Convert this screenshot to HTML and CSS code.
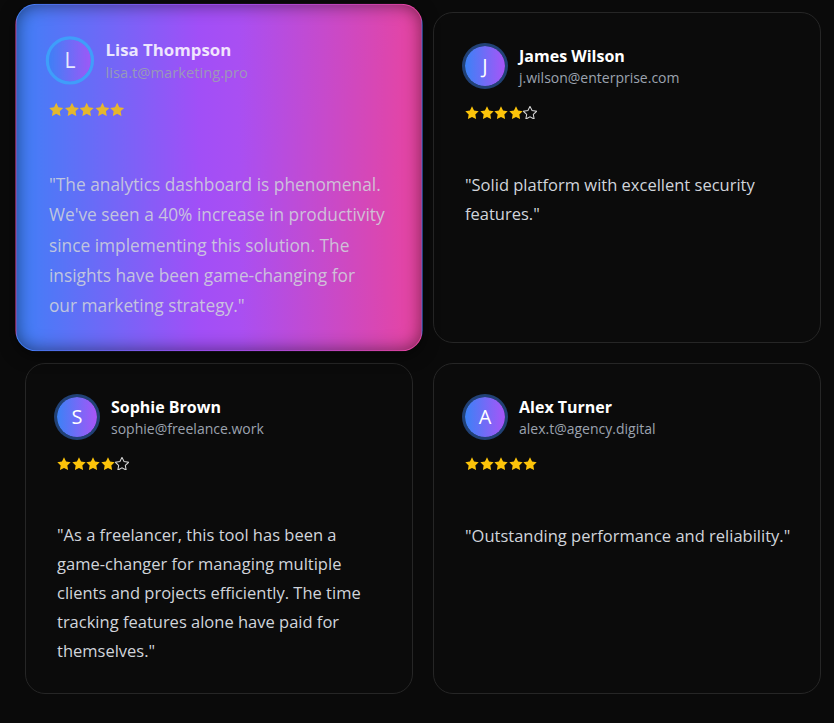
FILE: index.html
```html
<!DOCTYPE html>
<html lang="en">
<head>
<meta charset="utf-8">
<title>Testimonials</title>
<link rel="stylesheet" href="styles.css">
</head>
<body>
<svg class="defs" width="0" height="0" aria-hidden="true">
  <defs>
    <path id="star" d="M12 2l3.09 6.26L22 9.27l-5 4.87 1.18 6.88L12 17.770l-6.18 3.25L7 14.14 2 9.27l6.91-1.01L12 2z"/>
  </defs>
</svg>
<main class="grid">
  <article class="card card--active">
    <header class="head">
      <div class="avatar">L</div>
      <div class="who">
        <div class="name">Lisa Thompson</div>
        <div class="email">lisa.t@marketing.pro</div>
      </div>
    </header>
    <div class="stars">
      <svg class="star on" viewBox="1.5 1.5 21 20"><use href="#star"/></svg>
      <svg class="star on" viewBox="1.5 1.5 21 20"><use href="#star"/></svg>
      <svg class="star on" viewBox="1.5 1.5 21 20"><use href="#star"/></svg>
      <svg class="star on" viewBox="1.5 1.5 21 20"><use href="#star"/></svg>
      <svg class="star on" viewBox="1.5 1.5 21 20"><use href="#star"/></svg>
    </div>
    <p class="quote">"The analytics dashboard is phenomenal. We've seen a 40% increase in productivity since implementing this solution. The insights have been game-changing for our&nbsp;marketing strategy."</p>
  </article>

  <article class="card">
    <header class="head">
      <div class="avatar">J</div>
      <div class="who">
        <div class="name">James Wilson</div>
        <div class="email">j.wilson@enterprise.com</div>
      </div>
    </header>
    <div class="stars">
      <svg class="star on" viewBox="1.5 1.5 21 20"><use href="#star"/></svg>
      <svg class="star on" viewBox="1.5 1.5 21 20"><use href="#star"/></svg>
      <svg class="star on" viewBox="1.5 1.5 21 20"><use href="#star"/></svg>
      <svg class="star on" viewBox="1.5 1.5 21 20"><use href="#star"/></svg>
      <svg class="star off" viewBox="1.5 1.5 21 20"><use href="#star"/></svg>
    </div>
    <p class="quote">"Solid platform with excellent security features."</p>
  </article>

  <article class="card">
    <header class="head">
      <div class="avatar">S</div>
      <div class="who">
        <div class="name">Sophie Brown</div>
        <div class="email">sophie@freelance.work</div>
      </div>
    </header>
    <div class="stars">
      <svg class="star on" viewBox="1.5 1.5 21 20"><use href="#star"/></svg>
      <svg class="star on" viewBox="1.5 1.5 21 20"><use href="#star"/></svg>
      <svg class="star on" viewBox="1.5 1.5 21 20"><use href="#star"/></svg>
      <svg class="star on" viewBox="1.5 1.5 21 20"><use href="#star"/></svg>
      <svg class="star off" viewBox="1.5 1.5 21 20"><use href="#star"/></svg>
    </div>
    <p class="quote">"As a freelancer, this tool has been a game-changer for managing multiple clients and projects efficiently. The time tracking features alone have paid for themselves."</p>
  </article>

  <article class="card">
    <header class="head">
      <div class="avatar">A</div>
      <div class="who">
        <div class="name">Alex Turner</div>
        <div class="email">alex.t@agency.digital</div>
      </div>
    </header>
    <div class="stars">
      <svg class="star on" viewBox="1.5 1.5 21 20"><use href="#star"/></svg>
      <svg class="star on" viewBox="1.5 1.5 21 20"><use href="#star"/></svg>
      <svg class="star on" viewBox="1.5 1.5 21 20"><use href="#star"/></svg>
      <svg class="star on" viewBox="1.5 1.5 21 20"><use href="#star"/></svg>
      <svg class="star on" viewBox="1.5 1.5 21 20"><use href="#star"/></svg>
    </div>
    <p class="quote">"Outstanding performance and reliability."</p>
  </article>
</main>
</body>
</html>
```
FILE: styles.css
```css
* { box-sizing: border-box; }
html, body { margin: 0; padding: 0; }
body {
  background: #0a0a0a;
  font-family: "Open Sans", "Noto Sans", sans-serif;
  color: #d1d5db;
  width: 834px;
  height: 723px;
  overflow: hidden;
}
.defs { position: absolute; }
.grid {
  display: grid;
  grid-template-columns: 388px 388px;
  grid-auto-rows: 331px;
  gap: 20px;
  padding: 12px 0 0 25px;
}
.card {
  background: #0b0b0b;
  border: 1px solid #262626;
  border-radius: 20px;
  padding: 30px 27px 28px 28px;
  display: flex;
  flex-direction: column;
}
.card--active {
  position: relative;
  z-index: 2;
  transform: scale(1.05);
  border-color: transparent;
  background: linear-gradient(90deg, #3f80f7 0%, #a14ff7 45%, #a94ff2 55%, #e8449f 100%);
  box-shadow: inset 0 0 16px rgba(0, 0, 0, 0.5), 0 4px 14px rgba(0, 0, 0, 0.5);
}
.card--active > * { opacity: 0.85; }
.head {
  display: flex;
  align-items: center;
  gap: 11px;
}
.avatar {
  width: 46px;
  height: 46px;
  flex: none;
  border-radius: 50%;
  border: 3px solid rgba(59, 130, 246, 0.45);
  background: linear-gradient(90deg, #3b82f6, #a855f7) padding-box;
  color: #fff;
  font-size: 20px;
  display: flex;
  align-items: center;
  justify-content: center;
  line-height: 1;
}
.card--active .avatar { border-color: #3ba6fb; }
.who { display: flex; flex-direction: column; }
.name {
  font-size: 16px;
  font-weight: 700;
  line-height: 24px;
  color: #ffffff;
}
.email {
  font-size: 14px;
  line-height: 20px;
  color: #9ca3af;
}
.stars {
  display: flex;
  gap: 0.6px;
  margin: 17px 0 0 3px;
  height: 14px;
}
.star { width: 14px; height: 13.4px; }
.star.on { fill: #fcc40a; }
.star.off { fill: none; stroke: #d4d4d4; stroke-width: 1.6; }
.quote {
  margin: 51px 0 0 3px;
  font-size: 16.5px;
  line-height: 28.8px;
  color: #d1d5db;
}
```
